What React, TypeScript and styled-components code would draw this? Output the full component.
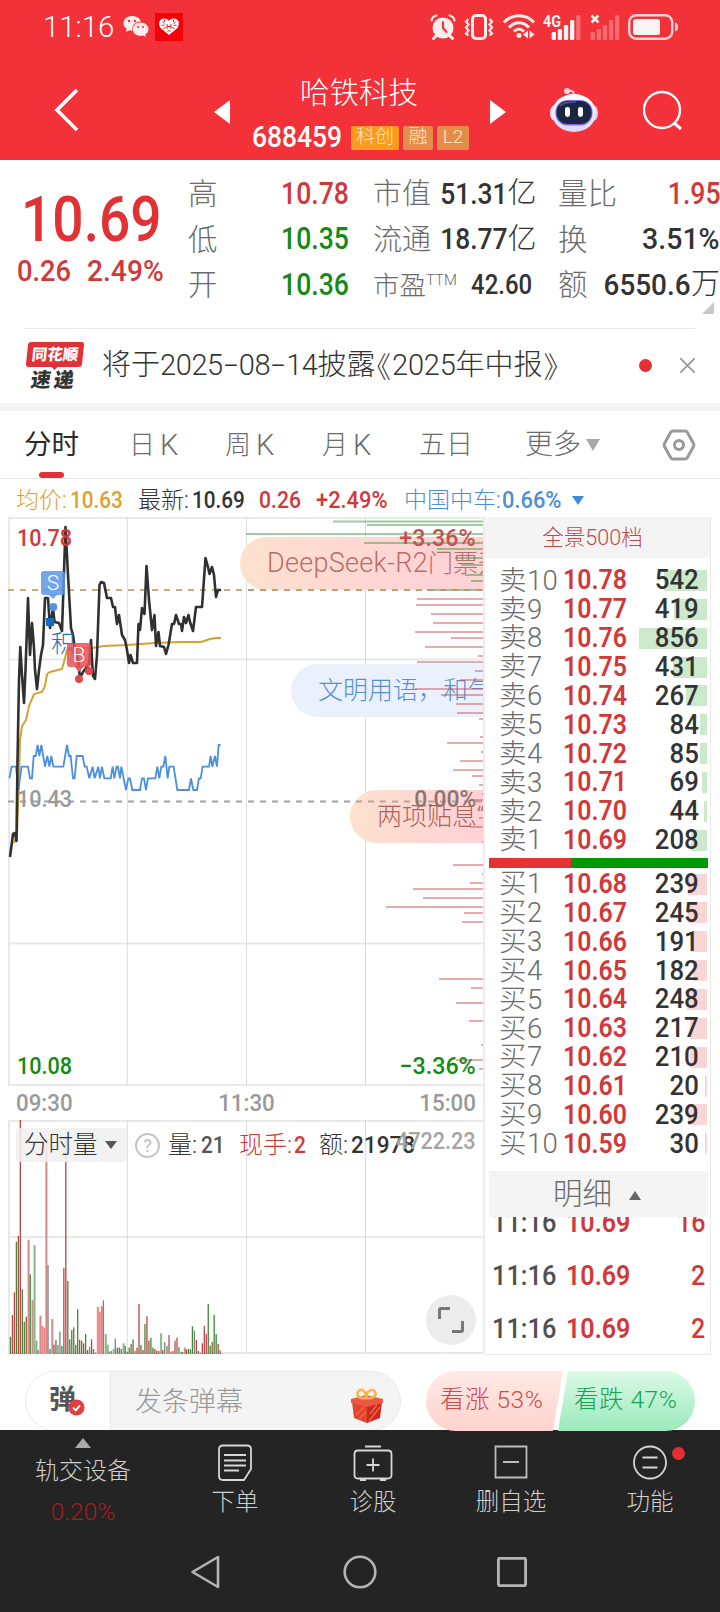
import React from "react";
import styled, { createGlobalStyle, css } from "styled-components";

const Global = createGlobalStyle`
  * { box-sizing: border-box; }
  body { margin: 0; background: #fff; }
  svg { display: block; flex: none; }
`;

const cjk = `"Noto Sans CJK SC", sans-serif`;
const RED = "#d2383a";
const GREEN = "#148a14";

const Screen = styled.div`
  width: 720px;
  height: 1612px;
  overflow: hidden;
  display: flex;
  flex-direction: column;
  background: #fff;
  font-family: ${cjk};
  font-weight: 300;
  color: #333;
`;

const Han = styled.span<{ $size: number; $color?: string; $weight?: number; $gap?: number }>`
  font: ${(p) => p.$weight ?? 300} ${(p) => p.$size}px/1 Roboto, ${cjk};
  letter-spacing: ${(p) => p.$gap ?? 0}px;
  color: ${(p) => p.$color ?? "inherit"};
  white-space: nowrap;
`;

const Num = styled.span<{ $size: number; $color?: string; $weight?: number; $k?: number; $from?: string }>`
  display: inline-block;
  font: ${(p) => p.$weight ?? 500} ${(p) => p.$size}px/1 Roboto, sans-serif;
  color: ${(p) => p.$color ?? "inherit"};
  white-space: nowrap;
  transform: scaleX(${(p) => p.$k ?? 0.87});
  transform-origin: ${(p) => p.$from ?? "left"} center;
`;

/* ---------- header ---------- */

const Header = styled.header`
  height: 160px;
  flex: none;
  background: #f23138;
  color: #fff;
`;

const StatusBar = styled.div`
  height: 54px;
  padding: 0 41px 0 43px;
  display: flex;
  justify-content: space-between;
  align-items: center;
`;

const StatusGroup = styled.div<{ $gap: number }>`
  display: flex;
  align-items: center;
  gap: ${(p) => p.$gap}px;
`;

const Clock = styled.div`
  width: 72px;
  display: flex;
`;

const TitleBar = styled.div`
  height: 106px;
  display: grid;
  grid-template-columns: 214px 33px 243px 16px 44px 48px 45px 1fr;
  align-items: center;
`;

const BackCell = styled.div`
  padding-left: 53px;
  padding-top: 6px;
`;

const ArrowCell = styled.div`
  padding-top: 10px;
`;

const IconCell = styled.div`
  padding-top: 6px;
`;

const TitleStack = styled.div`
  display: flex;
  flex-direction: column;
  align-items: flex-start;
  padding-top: 3px;
  height: 90px;
`;

const StockName = styled.div`
  padding-left: 53px;
  height: 58px;
  display: flex;
  align-items: center;
`;

const CodeRow = styled.div`
  display: grid;
  grid-template-columns: 95px 48px 30px 32px;
  column-gap: 4px;
  align-items: center;
  padding-left: 5px;
`;

const Tag = styled.span<{ $bg: string }>`
  height: 24px;
  border-radius: 2px;
  background: ${(p) => p.$bg};
  color: #ffe9bd;
  font: 300 19px/22px Roboto, ${cjk};
  text-align: center;
`;

/* ---------- quote ---------- */

const Quote = styled.section`
  height: 168px;
  flex: none;
  padding-top: 11px;
  display: grid;
  grid-template-columns: 188px 161px 24px 159px 26px 162px;
  position: relative;
`;

const PriceBlock = styled.div`
  padding-top: 15px;
`;

const LastPrice = styled.div`
  height: 66px;
  padding-left: 21px;
  display: flex;
  align-items: center;
`;

const ChangeRow = styled.div`
  height: 38px;
  padding-left: 17px;
  display: grid;
  grid-template-columns: 70px 1fr;
  align-items: center;
`;

const StatColumn = styled.div<{ $col: number }>`
  grid-column: ${(p) => p.$col};
`;

const Stat = styled.div`
  height: 45.5px;
  display: flex;
  align-items: center;
  justify-content: space-between;
  color: #333;
`;

const StatLabel = styled.div`
  display: flex;
  align-items: center;
  padding-top: 2px;
  color: #6b6b6b;
`;

const StatValue = styled.div`
  display: flex;
  align-items: center;
`;

const Super = styled.sup`
  font: 300 15px/15px Roboto, sans-serif;
  align-self: flex-start;
`;

const Corner = styled.i`
  position: absolute;
  right: 6px;
  bottom: 14px;
  border-left: 12px solid transparent;
  border-bottom: 12px solid #c9c9c9;
`;

const News = styled.section`
  height: 75px;
  flex: none;
  margin: 0 25px;
  border-top: 1px solid #e9e9e9;
  display: grid;
  grid-template-columns: 77px 537px 1fr 15px;
  align-items: center;
  padding-bottom: 1px;
`;

const NewsText = styled.div`
  display: flex;
  align-items: center;
  color: #333;
`;

const Dash = styled.span`
  width: 16px;
  font: 300 29px/1 Roboto, sans-serif;
  text-align: center;
  transform: scaleX(1.7);
`;

const Bracket = styled(Han)`
  font-family: ${cjk};
  font-feature-settings: "halt";
  margin: 0 1px;
`;

const NewsLogo = styled.div`
  width: 60px;
  height: 48px;
  display: flex;
  flex-direction: column;
  align-items: center;
`;

const LogoTop = styled.div`
  width: 56px;
  height: 25px;
  border-radius: 3px;
  background: #e03236;
  color: #fff;
  transform: skewX(-6deg);
  font: 900 15.5px/23px ${cjk};
  text-align: center;
  position: relative;
  &::after {
    content: "";
    position: absolute;
    left: 25px;
    top: 24px;
    border: 4px solid transparent;
    border-top-color: #e03236;
  }
`;

const LogoBottom = styled.div`
  transform: skewX(-8deg);
  font: 900 20px/22px ${cjk};
  letter-spacing: 3px;
  margin-top: 1px;
  padding-right: 2px;
  color: #333;
`;

const Dot = styled.i<{ $size: number }>`
  width: ${(p) => p.$size}px;
  height: ${(p) => p.$size}px;
  border-radius: 50%;
  background: #e52f33;
`;

/* ---------- tabs ---------- */

const Band = styled.div`
  height: 8px;
  flex: none;
  background: #f4f4f4;
`;

const Tabs = styled.nav`
  height: 68px;
  flex: none;
  padding-left: 24px;
  border-bottom: 1px solid #e6e6e6;
  display: grid;
  grid-template-columns: 105px 96px 97px 97px 106px 137px 1fr;
  align-items: center;
  color: #6b6b6b;
`;

const Tab = styled.div<{ $active?: boolean }>`
  height: 67px;
  padding-top: 1px;
  display: flex;
  align-items: center;
  gap: 5px;
  position: relative;
  ${(p) =>
    p.$active &&
    css`
      color: #2a2a2a;
      &::after {
        content: "";
        position: absolute;
        left: 15px;
        bottom: 0;
        width: 25px;
        height: 6px;
        border-radius: 3px;
        background: #e03236;
      }
    `}
`;

const Triangle = styled.i<{ $w: number; $h: number; $color: string; $up?: boolean }>`
  width: 0;
  border-left: ${(p) => p.$w / 2}px solid transparent;
  border-right: ${(p) => p.$w / 2}px solid transparent;
  ${(p) => (p.$up ? "border-bottom" : "border-top")}: ${(p) => p.$h}px solid ${(p) => p.$color};
`;

const InfoRow = styled.div`
  height: 38px;
  flex: none;
  padding-left: 16px;
  display: grid;
  grid-template-columns: 54px 68px 54px 67px 57px 88px 98px 70px 1fr;
  align-items: center;
  padding-top: 5px;
`;

/* ---------- main area ---------- */

const Main = styled.main`
  height: 838px;
  flex: none;
  display: grid;
  grid-template-columns: 485px 226px;
`;

const Charts = styled.div`
  padding-left: 8px;
  border-right: 2px solid #ececec;
  height: 837px;
`;

const PriceChart = styled.div`
  position: relative;
  height: 569px;
  overflow: hidden;
`;

const Overlay = styled.div<{ $x?: number; $r?: number; $y: number }>`
  position: absolute;
  top: ${(p) => p.$y}px;
  ${(p) => (p.$r !== undefined ? `right: ${p.$r}px;` : `left: ${p.$x}px;`)}
  display: flex;
  align-items: center;
`;

const Bullet = styled.div<{ $x: number; $y: number; $bg: string; $color: string }>`
  position: absolute;
  left: ${(p) => p.$x}px;
  top: ${(p) => p.$y}px;
  width: 400px;
  height: 53px;
  padding-left: 27px;
  border-radius: 27px;
  display: flex;
  align-items: center;
  background: ${(p) => p.$bg};
  color: ${(p) => p.$color};
`;

const Marker = styled.div<{ $x: number; $y: number; $bg: string }>`
  position: absolute;
  left: ${(p) => p.$x}px;
  top: ${(p) => p.$y}px;
  width: 24px;
  height: 24px;
  border-radius: 3px;
  background: ${(p) => p.$bg};
  color: #fff;
  font: 300 21px/24px Roboto, sans-serif;
  text-align: center;
`;

const TimeAxis = styled.div`
  height: 34px;
  padding: 0 7px 0 8px;
  display: flex;
  justify-content: space-between;
  align-items: center;
  color: #999;
`;

const VolumeChart = styled.div`
  position: relative;
  height: 234px;
`;

const VolumeHead = styled.div`
  position: absolute;
  left: 8px;
  top: 8px;
  height: 34px;
  display: grid;
  grid-template-columns: 111px 41px 33px 38px 55px 25px 32px 70px;
  align-items: center;
`;

const Picker = styled.div`
  height: 34px;
  padding-left: 8px;
  border-radius: 4px;
  display: flex;
  align-items: center;
  gap: 7px;
  background: rgba(240, 240, 240, 0.88);
  color: #333;
`;

const Help = styled.div`
  width: 25px;
  height: 25px;
  margin-left: 8px;
  border: 2px solid #c4c4c4;
  border-radius: 50%;
  color: #bbb;
  font: 400 18px/21px Roboto, sans-serif;
  text-align: center;
`;

const Expand = styled.div`
  position: absolute;
  right: 7px;
  bottom: 9px;
  width: 50px;
  height: 50px;
  border-radius: 50%;
  background: #ececec;
  display: grid;
  place-items: center;
`;

/* ---------- order book ---------- */

const Book = styled.aside`
  height: 838px;
  border: 1px solid #e8e8e8;
  border-top: 0;
  border-left: 0;
  display: flex;
  flex-direction: column;
  overflow: hidden;
`;

const BookHead = styled.div`
  height: 41px;
  flex: none;
  background: #f4f4f4;
  display: flex;
  align-items: center;
  justify-content: center;
  padding-right: 10px;
`;

const Levels = styled.div<{ $top: number }>`
  padding-top: ${(p) => p.$top}px;
`;

const Level = styled.div`
  height: 28.86px;
  padding-left: 14px;
  padding-right: 11px;
  display: grid;
  grid-template-columns: 64px 70px 1fr;
  align-items: center;
  position: relative;
`;

const LevelNum = styled.div`
  text-align: right;
  position: relative;
`;

const DepthBar = styled.i<{ $w: number; $color: string }>`
  position: absolute;
  right: 3px;
  top: 4px;
  height: 21px;
  width: ${(p) => p.$w}px;
  background: ${(p) => p.$color};
`;

const Ratio = styled.div`
  height: 10px;
  margin: 3px 2px 1px 4px;
  flex: none;
  background: linear-gradient(90deg, #e63232 82px, #029a02 82px);
`;

const DetailHead = styled.div`
  height: 46px;
  margin: 13px 2px 0 4px;
  flex: none;
  padding-left: 64px;
  padding-top: 2px;
  display: flex;
  align-items: center;
  gap: 17px;
  background: #f4f4f4;
  color: #6b6b6b;
`;

const Trades = styled.div`
  flex: 1;
  min-height: 0;
  overflow: hidden;
  display: flex;
  flex-direction: column;
  justify-content: flex-end;
`;

const Trade = styled.div`
  height: 53px;
  flex: none;
  padding: 4px 5px 0 7px;
  display: grid;
  grid-template-columns: 74px 70px 1fr;
  align-items: center;
`;

/* ---------- comment bar ---------- */

const CommentBar = styled.section`
  height: 75px;
  flex: none;
  padding: 16px 25px 0;
  display: flex;
  justify-content: space-between;
`;

const CommentPill = styled.div`
  width: 376px;
  height: 60px;
  border: 1px solid #e8e8e8;
  border-radius: 30px;
  background: #f4f4f4;
  overflow: hidden;
  display: grid;
  grid-template-columns: 85px 1fr 50px;
  align-items: center;
`;

const DanmuToggle = styled.div`
  height: 60px;
  background: #fff;
  border-right: 1px solid #e8e8e8;
  padding-left: 23px;
  position: relative;
  font: 700 27px/52px ${cjk};
  color: #555;
`;

const ToggleCheck = styled.svg`
  position: absolute;
  left: 42px;
  top: 27px;
`;

const CommentHint = styled.div`
  padding-left: 24px;
  color: #999;
  line-height: 1;
`;

const GiftCell = styled.div`
  padding-top: 8px;
`;

const Votes = styled.div`
  width: 269px;
  display: flex;
`;

const Vote = styled.div<{ $up?: boolean }>`
  height: 60px;
  width: 137px;
  margin-left: ${(p) => (p.$up ? 0 : -5)}px;
  border-radius: ${(p) => (p.$up ? "30px 0 0 30px" : "0 30px 30px 0")};
  clip-path: ${(p) =>
    p.$up ? "polygon(0 0, 100% 0, 127px 100%, 0 100%)" : "polygon(10px 0, 100% 0, 100% 100%, 0 100%)"};
  background: ${(p) =>
    p.$up ? "linear-gradient(#ffeae7, #ffd3cd)" : "linear-gradient(#dcfae7, #9aeabb)"};
  color: ${(p) => (p.$up ? "#cf4a48" : "#17a455")};
  padding-left: ${(p) => (p.$up ? 14 : 16)}px;
  padding-bottom: 1px;
  display: flex;
  align-items: center;
`;

/* ---------- bottom ---------- */

const Bottom = styled.footer`
  height: 182px;
  flex: none;
  background: #242424;
  color: #d0d0d0;
`;

const Actions = styled.div`
  height: 102px;
  display: grid;
  grid-template-columns: 166px 138px 138px 138px 140px;
`;

const Action = styled.div`
  display: flex;
  flex-direction: column;
  align-items: center;
  padding-top: 13px;
  gap: 8px;
  position: relative;
`;

const Sector = styled.div`
  display: flex;
  flex-direction: column;
  align-items: center;
  padding-top: 8px;
`;

const SectorName = styled.div`
  margin-top: 11px;
  height: 24px;
  line-height: 1;
`;

const SectorChange = styled.div`
  margin-top: 17px;
  line-height: 1;
`;

const Badge = styled(Dot)`
  position: absolute;
  left: 92px;
  top: 17px;
`;

const NavBar = styled.div`
  height: 80px;
  display: grid;
  grid-template-columns: 191px 152px 154px 1fr;
  align-items: center;
`;

/* ---------- data ---------- */

const pricePts =
  "10,857 13,834 15,833 16.5,841 17.5,760 19,680 20.3,647 22,675 24,703 25.5,670 28,598 30,655 32,623 34,648 35,670 37,689 39,670 41,655 43,645 45,598 48,598 50,628 53,608 54.5,622 59,623 62,631 65.5,527 68,575 71,628 73,635 75,650 78,660 80,678 83,672 86,668 89,663 91,640 92,660 93,676 95,679 97,655 99.5,585 101,582 104,583 107,598 111,598 113,607 115,607 117,624 119,615 122,635 125,640 127,650 129,663 130.5,655 133,663 137,663 138.5,624 140,630 142,608 144.5,614 146.5,566 149,600 152,630 154.5,615 156,646 158.5,632 160,646 164,647 166,654 168.5,645 172,624 174,624 176,615 179,624 181,624 182,631 184,617 186,623 188.5,615 190,622 193,631 196,607 202,607 205.5,558 208,567 209.5,574 212,567 214,575 216,597 218,590 221,590";
const avgPts =
  "14,843 17,835 19,780 20,740 22,726 26,720 29,706 34,694 42,692 45,686 47,674 50,672 62,669 64,662 67,650 72,648 92,648 104,646 127,645 155,643 180,642 201,642 210,639 216,638 221,638";
const peerPts =
  "28,415 35,380 48,380 55,450 65,380 84,380 90,415 96,415 101,348 107,348 113,315 118,348 124,315 135,380 142,348 148,380 154,348 160,380 190,380 201,315 207,348 212,348 219,415 224,415 230,348 248,348 254,380 260,380 268,415 278,380 284,415 295,380 300,415 306,380 313,415 332,415 338,380 343,415 350,380 354,380 360,415 364,380 378,450 385,415 390,415 397,450 420,450 426,415 432,415 438,450 444,415 466,415 472,380 478,415 484,380 490,380 496,348 503,415 508,380 521,380 532,450 567,450 573,415 580,450 591,450 597,415 602,415 608,380 627,380 632,348 637,380 645,348 651,380 656,315 662,315";

const depthUp: [number, number][] = [
  [521.5, 333], [525, 367], [534, 246], [543, 364], [549, 437], [558, 455], [565, 461], [575, 465], [581, 471], [590, 427],
];
const depthDown: [number, number][] = [
  [599, 417], [605, 416], [614, 431], [623, 433], [632, 415], [638, 451], [647, 425], [656, 478], [662, 417], [671, 475],
  [680, 460], [689, 415], [695, 441], [704, 456], [713, 457], [719, 479], [737, 480], [743, 447], [752, 481], [761, 460],
  [770, 453], [776, 472], [785, 479], [794, 482], [800, 470], [818, 479], [827, 470], [842, 482], [865, 453], [874, 482],
  [883, 470], [889, 413], [898, 423], [907, 386], [913, 464], [922, 462], [979, 439], [988, 471], [1003, 456], [1021, 469],
  [1045, 481], [1060, 456], [1069, 479],
];

const volume =
  "52g 117r 185r 337g 354r 702r 194g 97g 112r 343p 239g 162p 327l 40l 12k 115p 84s 79s 647p 267k 15g 105p 28r 42g 27k 67k 24g 258r 650r 219g 44g 72g 80r 27g 134g 43r 40g 32r 60g 12r 22k 44r 15g 4k 141s 127s 144s 161k 60l 28l 7k 9k 15l 46k 19g 19r 15g 32l 24g 7r 19g 30r 44g 10k 19r 150r 27g 12r 90g 113r 40r 48g 19g 15r 10r 9r 62l 12r 36k 24l 57p 7s 9s 40p 49p 21l 6l 6g 19p 14r 15g 14g 83g 70k 42r 9g 4k 32r 84r 60r 150g 25g 36r 117g 60g 30r 11r 2k"
    .split(" ")
    .map((s) => ({ h: parseInt(s, 10) / 3, c: s.slice(-1) }));
const volumeColor: Record<string, string> = {
  r: "#b94444", g: "#3c8a36", k: "#808080", p: "#cf8a8a", l: "#84b884", s: "#ef8484",
};

const asks: [string, string, number][] = [
  ["卖10", "10.78", 542], ["卖9", "10.77", 419], ["卖8", "10.76", 856], ["卖7", "10.75", 431], ["卖6", "10.74", 267],
  ["卖5", "10.73", 84], ["卖4", "10.72", 85], ["卖3", "10.71", 69], ["卖2", "10.70", 44], ["卖1", "10.69", 208],
];
const bids: [string, string, number][] = [
  ["买1", "10.68", 239], ["买2", "10.67", 245], ["买3", "10.66", 191], ["买4", "10.65", 182], ["买5", "10.64", 248],
  ["买6", "10.63", 217], ["买7", "10.62", 210], ["买8", "10.61", 20], ["买9", "10.60", 239], ["买10", "10.59", 30],
];
const trades: [string, string, number][] = [["11:16", "10.69", 16], ["11:16", "10.69", 2], ["11:16", "10.69", 2]];

/* ---------- icons ---------- */

const WeChat = () => (
  <svg width="26" height="24" viewBox="0 0 26 24">
    <path fill="#ffecec" d="M9 1C4 1 .5 4.200 .5 8.200c0 2.400 1.200 4.300 3.200 5.600L3 17l3.400-1.800c1 .2 2 .3 3 .2C8.500 10.500 12.300 6.500 18 6.600 17 3.200 13.400 1 9 1z" />
    <path fill="#ffecec" d="M17.500 7.600c-4.400 0-7.800 2.900-7.800 6.600s3.400 6.600 7.800 6.600c1 0 1.900-.1 2.700-.4L23 22l-.6-2.700c1.900-1.200 3.100-3 3.100-5.100 0-3.700-3.500-6.600-8-6.600z" />
    <g fill="#f23138"><circle cx="6" cy="6" r="1.200" /><circle cx="12" cy="6" r="1.200" /><circle cx="15" cy="12" r="1" /><circle cx="20" cy="12" r="1" /></g>
  </svg>
);

const HeartApp = () => (
  <svg width="28" height="28" viewBox="0 0 28 28">
    <rect width="28" height="28" fill="#f40006" />
    <path d="M14 8C12 5 8 5 6 6.500 3 9 4 13 6 15.500L14 22l8-6.500c2-2.500 3-6.500 0-9C20 5 16 5 14 8z" fill="#fff" />
    <path d="M12 11v5M16 11v5M12 13.500h4M7.500 9l2 1.500M6.500 12.500l3-.5M20.500 9l-2 1.500M21.500 12.500l-3-.5M8.500 15.500l2-1M19.500 15.500l-2-1M12.500 18.500l1.500-1 1.500 1M9.500 7v2M18.500 7v2" stroke="#f40006" strokeWidth=".9" fill="none" />
  </svg>
);

const Alarm = () => (
  <svg width="26" height="26" viewBox="0 0 26 26" fill="none" stroke="#ffecec" strokeLinecap="round">
    <circle cx="13" cy="14" r="10.500" fill="#ffecec" stroke="none" />
    <path d="M1.500 6.500C2 4 4 2 6.500 1.500M24.500 6.500C24 4 22 2 19.500 1.500" strokeWidth="2.200" />
    <path d="M6 22l-2.500 2.500M20 22l2.500 2.500" strokeWidth="3" />
    <path d="M13 8v6l3.500 4" stroke="#f23138" strokeWidth="2" />
  </svg>
);

const Vibrate = () => (
  <svg width="30" height="26" viewBox="0 0 30 26" fill="none" stroke="#ffecec">
    <rect x="8.500" y="1.500" width="13" height="23" rx="3.500" strokeWidth="3" />
    <path d="M4.500 5L2 7.500l2.500 3L2 13.500l2.500 3L2 19.500l2.500 2M25.500 5L28 7.500l-2.500 3 2.500 3-2.500 3 2.500 3-2.500 2" strokeWidth="2.200" />
  </svg>
);

const Wifi = () => (
  <svg width="32" height="26" viewBox="0 0 32 26" fill="none" stroke="#ffecec" strokeWidth="3">
    <path d="M1 8.500C9-.5 23-.5 31 8.500M6 13.500C12 7 20 7 26 13.500M11 17.500c3-3 7-3 10 0" />
    <circle cx="16" cy="21.500" r="2.500" fill="#ffecec" stroke="none" />
    <path d="M20 20.500l5-4v8zM26.500 16.500l5 4-5 4z" fill="#ffecec" stroke="none" />
  </svg>
);

const Bars = ({ strong, x }: { strong: number; x: number }) => (
  <g fill="#fff3f3">
    {[8, 11, 15, 20, 25].map((h, i) => (
      <rect key={i} x={x + i * 6.1} y={26 - h} width="4.300" height={h} rx="1.200" opacity={i < strong ? 1 : 0.3} />
    ))}
  </g>
);

const Signal4G = () => (
  <svg width="38" height="26" viewBox="0 0 38 26">
    <text x="0" y="13" fontFamily="Roboto" fontWeight="700" fontSize="16" fill="#fff3f3" textLength="18" lengthAdjust="spacingAndGlyphs">4G</text>
    <Bars strong={4} x={8.7} />
  </svg>
);

const SignalNone = () => (
  <svg width="30" height="26" viewBox="0 0 30 26">
    <path d="M1.500 1.500l7 7M8.500 1.500l-7 7" stroke="#fff3f3" strokeWidth="2.500" />
    <Bars strong={0} x={0.6} />
  </svg>
);

const Battery = () => (
  <svg width="51" height="26" viewBox="0 0 51 26">
    <rect x="1.200" y="1.200" width="43" height="23.500" rx="7" fill="none" stroke="#ffd3d5" strokeWidth="2.400" />
    <rect x="5" y="5" width="27" height="16" rx="2.500" fill="#fff3f3" />
    <path d="M47 8.500c4 0 4 9 0 9z" fill="#ffd3d5" />
  </svg>
);

const Robot = () => (
  <svg width="48" height="46" viewBox="0 0 48 46">
    <defs>
      <linearGradient id="rb" x1="0" y1="0" x2="0" y2="1"><stop offset="0" stopColor="#fff" /><stop offset="1" stopColor="#dcd8fb" /></linearGradient>
    </defs>
    <path d="M17 4c5-1 7 0 7 5" fill="none" stroke="#fbc9d2" strokeWidth="2" />
    <circle cx="17" cy="4" r="3" fill="#ffd3dc" />
    <ellipse cx="4" cy="26" rx="4" ry="7.500" fill="#e2d8fa" />
    <ellipse cx="44" cy="26" rx="4" ry="7.500" fill="#d8cdf8" />
    <ellipse cx="24" cy="26" rx="22" ry="19" fill="url(#rb)" />
    <rect x="5.500" y="13" width="37" height="25.500" rx="12" fill="#7b6de8" />
    <rect x="6.500" y="14" width="35" height="23" rx="11" fill="#1b2544" />
    <path d="M10 19c3-4 10-4 16-4" stroke="#4a5680" strokeWidth="1.500" fill="none" />
    <rect x="15" y="20" width="5" height="10" rx="2.400" fill="#fff" />
    <rect x="28" y="20" width="5" height="10" rx="2.400" fill="#fff" />
  </svg>
);

const Gift = () => (
  <svg width="34" height="36" viewBox="0 0 34 36">
    <path d="M2 14l15 4v17L4 30z" fill="#e2442e" />
    <path d="M17 18l15-4-2 16-13 5z" fill="#c9291f" />
    <path d="M1 11l15-4 17 4v4l-16 4L1 15z" fill="#ee5742" />
    <path d="M6 27l8-8M9 31l7-7M19 33l11-14M20 26l7-9" stroke="#f4693f" strokeWidth="1.300" />
    <path d="M16 10C10 11 6 8 8 4s8-2 8 5c1-7 7-9 9-5s-2 7-9 6z" fill="none" stroke="#f4b84a" strokeWidth="2.600" />
  </svg>
);

const IconBox = ({ children }: { children: React.ReactNode }) => (
  <svg width="40" height="40" viewBox="0 0 40 40" fill="none" stroke="#d6d6d6" strokeWidth="1.800">
    {children}
  </svg>
);

/* ---------- parts ---------- */

const LevelRow = ({ row, tint }: { row: [string, string, number]; tint: string }) => (
  <Level>
    <DepthBar $w={Math.max(1.5, row[2] * 0.0793)} $color={tint} />
    <Han $size={27.5} $gap={0.4} $color="#6b6b6b">{row[0]}</Han>
    <Num $size={28} $color={RED} $weight={600} $k={0.89}>{row[1]}</Num>
    <LevelNum><Num $size={28} $weight={500} $k={0.92} $from="right">{row[2]}</Num></LevelNum>
  </Level>
);

const PricePlot = () => (
  <svg width="476" height="569" viewBox="8 517 476 569" fill="none">
    <path d="M8 518H484M8 659.500H484M8 943.500H484M8 1085H484M9 517V1086" stroke="#e9e9e9" strokeWidth="2" />
    <path d="M127.300 517V1086M246.500 517V1086M365.500 517V1086" stroke="#dcdcdc" />
    <path d="M8 590H484" stroke="#c5ad7c" strokeWidth="2" strokeDasharray="6 6" />
    <path d="M8 801.500H484" stroke="#a0a0a0" strokeWidth="2" strokeDasharray="6 6" />
    <polyline points={avgPts} stroke="#d9a02f" strokeWidth="2" />
    <g transform="translate(0 640) scale(.3333)"><polyline points={peerPts} stroke="#4d90dc" strokeWidth="5.500" /></g>
    <polyline points={pricePts} stroke="#303030" strokeWidth="2.600" strokeLinejoin="round" />
  </svg>
);

const DepthPlot = () => (
  <svg width="476" height="569" viewBox="8 517 476 569" fill="none">
    {depthUp.map(([y, x]) => <path key={y} d={`M${x} ${y}H484`} stroke="#3f9a3f" strokeOpacity=".5" strokeWidth="2" />)}
    {depthDown.map(([y, x]) => <path key={y} d={`M${x} ${y}H484`} stroke="#cc5055" strokeOpacity=".48" strokeWidth="2" />)}
    <path d="M356 801.500H484" stroke="#a08a86" strokeOpacity=".7" strokeWidth="2" strokeDasharray="6 6" />
    <path d="M248 590H484" stroke="#b5985f" strokeOpacity=".8" strokeWidth="2" strokeDasharray="6 6" />
  </svg>
);

export default function App() {
  return (
    <Screen>
      <Global />
      <Header>
        <StatusBar>
          <StatusGroup $gap={8}>
            <Clock><Num $size={30} $weight={300} $k={0.98}>11:16</Num></Clock>
            <StatusGroup $gap={6}><WeChat /><HeartApp /></StatusGroup>
          </StatusGroup>
          <StatusGroup $gap={8.4}><Alarm /><Vibrate /><Wifi /><Signal4G /><SignalNone /><Battery /></StatusGroup>
        </StatusBar>
        <TitleBar>
          <BackCell>
            <svg width="26" height="44" viewBox="0 0 26 44" fill="none" stroke="#fff" strokeWidth="3.600"><path d="M24 2L4 22l20 20" /></svg>
          </BackCell>
          <ArrowCell><svg width="16" height="24" viewBox="0 0 16 24"><path d="M16 0v24L0 12z" fill="#fff" /></svg></ArrowCell>
          <TitleStack>
            <StockName><Han $size={29.5}>哈铁科技</Han></StockName>
            <CodeRow>
              <Num $size={29} $weight={500} $k={0.91}>688459</Num>
              <Tag $bg="#fd9b20">科创</Tag>
              <Tag $bg="#e58c4d">融</Tag>
              <Tag $bg="#e58c4d">L2</Tag>
            </CodeRow>
          </TitleStack>
          <ArrowCell><svg width="16" height="24" viewBox="0 0 16 24"><path d="M0 0v24l16-12z" fill="#fff" /></svg></ArrowCell>
          <span />
          <IconCell><Robot /></IconCell>
          <span />
          <IconCell>
            <svg width="40" height="40" viewBox="0 0 40 40" fill="none" stroke="#fff" strokeWidth="2.400"><circle cx="19" cy="20" r="18" /><path d="M31 33l7 6" strokeWidth="3" /></svg>
          </IconCell>
        </TitleBar>
      </Header>

      <Quote>
        <PriceBlock>
          <LastPrice><Num $size={63} $color="#e03234" $weight={500} $k={0.875}>10.69</Num></LastPrice>
          <ChangeRow>
            <Num $size={30} $color={RED} $k={0.91}>0.26</Num>
            <Num $size={30} $color={RED} $k={0.94}>2.49%</Num>
          </ChangeRow>
        </PriceBlock>
        <StatColumn $col={2}>
          <Stat><StatLabel><Han $size={29.5}>高</Han></StatLabel><Num $size={30.5} $color={RED} $from="right">10.78</Num></Stat>
          <Stat><StatLabel><Han $size={29.5}>低</Han></StatLabel><Num $size={30.5} $color={GREEN} $from="right">10.35</Num></Stat>
          <Stat><StatLabel><Han $size={29.5}>开</Han></StatLabel><Num $size={30.5} $color={GREEN} $from="right">10.36</Num></Stat>
        </StatColumn>
        <StatColumn $col={4}>
          <Stat><StatLabel><Han $size={29}>市值</Han></StatLabel><StatValue><Num $size={30} $k={0.88} $from="right">51.31</Num><Han $size={29}>亿</Han></StatValue></Stat>
          <Stat><StatLabel><Han $size={29}>流通</Han></StatLabel><StatValue><Num $size={30} $k={0.88} $from="right">18.77</Num><Han $size={29}>亿</Han></StatValue></Stat>
          <Stat><StatLabel><Han $size={26.5}>市盈</Han><Super>TTM</Super></StatLabel><Num $size={27.5} $from="right">42.60</Num></Stat>
        </StatColumn>
        <StatColumn $col={6}>
          <Stat><StatLabel><Han $size={29.5}>量比</Han></StatLabel><Num $size={30.5} $color={RED} $from="right">1.95</Num></Stat>
          <Stat><StatLabel><Han $size={29.5}>换</Han></StatLabel><Num $size={30} $from="right" $k={0.95}>3.51%</Num></Stat>
          <Stat><StatLabel><Han $size={29.5}>额</Han></StatLabel><StatValue><Num $size={30} $k={0.93} $from="right">6550.6</Num><Han $size={29}>万</Han></StatValue></Stat>
        </StatColumn>
        <Corner />
      </Quote>

      <News>
        <NewsLogo><LogoTop>同花顺</LogoTop><LogoBottom>速递</LogoBottom></NewsLogo>
        <NewsText>
          <Han $size={29}>将于</Han>
          <Han $size={29} $gap={-0.4}>2025</Han><Dash>-</Dash><Han $size={29} $gap={-0.4}>08</Han><Dash>-</Dash><Han $size={29} $gap={-0.4}>14</Han>
          <Han $size={29}>披露</Han>
          <Bracket $size={29}>《</Bracket>
          <Han $size={29} $gap={-0.2}>2025</Han>
          <Han $size={29}>年中报</Han>
          <Bracket $size={29}>》</Bracket>
        </NewsText>
        <Dot $size={13} />
        <svg width="15" height="15" viewBox="0 0 15 15" stroke="#999" strokeWidth="1.800"><path d="M0 0l15 15M15 0L0 15" /></svg>
      </News>
      <Band />

      <Tabs>
        <Tab $active><Han $size={27.5} $weight={400}>分时</Han></Tab>
        <Tab><Han $size={26}>日</Han><Han $size={29}>K</Han></Tab>
        <Tab><Han $size={26}>周</Han><Han $size={29}>K</Han></Tab>
        <Tab><Han $size={26}>月</Han><Han $size={29}>K</Han></Tab>
        <Tab><Han $size={27}>五日</Han></Tab>
        <Tab><Han $size={28}>更多</Han><Triangle $w={15} $h={12} $color="#a8a8a8" /></Tab>
        <svg width="34" height="34" viewBox="0 0 34 34" fill="none" stroke="#999" strokeWidth="3">
          <path d="M11 3h12q1.500 0 2.300 1.300L31.500 15.500q.8 1.500 0 3L25.300 29.700Q24.500 31 23 31H11q-1.500 0-2.300-1.300L2.500 18.500q-.8-1.500 0-3L8.700 4.300Q9.500 3 11 3z" />
          <circle cx="17" cy="17" r="4.500" />
        </svg>
      </Tabs>

      <InfoRow>
        <Han $size={23} $color="#dfa02a">均价:</Han>
        <Num $size={23} $color="#dfa02a" $k={0.9}>10.63</Num>
        <Han $size={23}>最新:</Han>
        <Num $size={23} $k={0.9}>10.69</Num>
        <Num $size={23} $color={RED} $k={0.92}>0.26</Num>
        <Num $size={23} $color={RED} $k={0.95}>+2.49%</Num>
        <Han $size={23} $color="#4c8fd8">中国中车:</Han>
        <Num $size={23} $color="#4c8fd8" $k={0.95}>0.66%</Num>
        <Triangle $w={13} $h={9} $color="#3f8be0" />
      </InfoRow>

      <Main>
        <Charts>
          <PriceChart>
            <PricePlot />
            <Bullet $x={232} $y={20} $bg="linear-gradient(90deg, #fde1cd, #ffd2d6 200px)" $color="#b96d69">
              <Han $size={27} $gap={0.3}>DeepSeek-R2</Han><Han $size={25}>门票开</Han>
            </Bullet>
            <Bullet $x={283} $y={147} $bg="#eaf1fc" $color="#5590d2"><Han $size={25}>文明用语，和气</Han></Bullet>
            <Bullet $x={342} $y={273} $bg="linear-gradient(90deg, #fde1cd, #ffd2d6 130px)" $color="#b0605b"><Han $size={25}>两项贴息“</Han></Bullet>
            <Overlay $x={0} $y={0}><DepthPlot /></Overlay>
            <Overlay $x={9} $y={9}><Num $size={24} $color={RED} $k={0.9}>10.78</Num></Overlay>
            <Overlay $r={7} $y={9}><Num $size={24} $color="#c8504e" $k={0.97} $from="right">+3.36%</Num></Overlay>
            <Overlay $x={9} $y={270}><Num $size={24} $color="#999" $k={0.9}>10.43</Num></Overlay>
            <Overlay $r={7} $y={270}><Num $size={24} $color="#8d7470" $k={0.95} $from="right">0.00%</Num></Overlay>
            <Overlay $x={9} $y={537}><Num $size={24} $color={GREEN} $k={0.9}>10.08</Num></Overlay>
            <Overlay $r={7} $y={537}><Num $size={24} $color={GREEN} $k={0.97} $from="right">−3.36%</Num></Overlay>
            <Overlay $x={43} $y={115}><Han $size={24} $color="#2c70b8">积</Han></Overlay>
            <Overlay $x={33} $y={72}>
              <svg width="70" height="90" viewBox="41 589 70 90">
                <path d="M48 594h10l-5 5z" fill="#6ea5e8" />
                <circle cx="53.300" cy="607" r="4" fill="#5292e2" />
                <rect x="46" y="618" width="8" height="8" fill="#0f6ac8" />
              </svg>
            </Overlay>
            <Overlay $x={63} $y={148}>
              <svg width="26" height="20" viewBox="71 665 26 20">
                <path d="M74 666h10l-5 6z" fill="#e65a5e" />
                <circle cx="79" cy="679" r="4" fill="#e04a4e" /><circle cx="89" cy="671" r="4" fill="#e04a4e" />
              </svg>
            </Overlay>
            <Marker $x={33} $y={54} $bg="rgba(90,152,230,.85)">S</Marker>
            <Marker $x={59} $y={126} $bg="rgba(230,80,84,.85)">B</Marker>
          </PriceChart>
          <TimeAxis>
            <Num $size={24} $color="#999" $k={0.93} $weight={500}>09:30</Num>
            <Num $size={24} $color="#999" $k={0.93} $weight={500} $from="center">11:30</Num>
            <Num $size={24} $color="#999" $k={0.93} $weight={500} $from="right">15:00</Num>
          </TimeAxis>
          <VolumeChart>
            <svg width="476" height="234" viewBox="8 1120 476 234" fill="none">
              <path d="M8 1121H484M8 1237H484M8 1353H484M9 1120V1354" stroke="#e9e9e9" strokeWidth="2" />
              <path d="M127.300 1120V1354M246.500 1120V1354M365.500 1120V1354" stroke="#dcdcdc" />
              {volume.map((v, i) => {
                const wide = "pls".includes(v.c);
                return <rect key={i} x={9.8 + i * 1.978} y={1354 - v.h} width={wide ? 2 : 1.3} height={v.h} fill={volumeColor[v.c]} />;
              })}
            </svg>
            <VolumeHead>
              <Picker><Han $size={24.5}>分时量</Han><Triangle $w={13} $h={8} $color="#555" /></Picker>
              <Help>?</Help>
              <Han $size={24}>量:</Han>
              <Num $size={24} $color="#555">21</Num>
              <Han $size={24} $color={RED}>现手:</Han>
              <Num $size={24} $color={RED}>2</Num>
              <Han $size={24}>额:</Han>
              <Num $size={24} $k={0.94}>21978</Num>
            </VolumeHead>
            <Overlay $r={7} $y={9}><Num $size={24} $color="#a4a4a4" $k={0.9} $from="right">4722.23</Num></Overlay>
            <Expand>
              <svg width="26" height="26" viewBox="0 0 26 26" fill="none" stroke="#777" strokeWidth="3"><path d="M1.500 12V3q0-1.500 1.500-1.500h9M24.500 14v9q0 1.500-1.500 1.500h-9" /></svg>
            </Expand>
          </VolumeChart>
        </Charts>

        <Book>
          <BookHead><Han $size={21.5} $color="#bf4a48">全景500档</Han></BookHead>
          <Levels $top={8}>{asks.map((r) => <LevelRow key={r[0]} row={r} tint="#cce9cc" />)}</Levels>
          <Ratio />
          <Levels $top={1}>{bids.map((r) => <LevelRow key={r[0]} row={r} tint="#f9d5d5" />)}</Levels>
          <DetailHead><Han $size={29.5}>明细</Han><Triangle $up $w={13} $h={9} $color="#666" /></DetailHead>
          <Trades>
            {trades.map((t, i) => (
              <Trade key={i}>
                <Num $size={28.5} $color="#505050" $k={0.89}>{t[0]}</Num>
                <Num $size={28.5} $color={RED} $weight={600} $k={0.88}>{t[1]}</Num>
                <LevelNum><Num $size={28.5} $color={RED} $k={0.88} $from="right">{t[2]}</Num></LevelNum>
              </Trade>
            ))}
          </Trades>
        </Book>
      </Main>

      <CommentBar>
        <CommentPill>
          <DanmuToggle>
            弹
            <ToggleCheck width="17" height="17" viewBox="0 0 17 17"><circle cx="8.500" cy="8.500" r="8" fill="#e2403c" /><path d="M5 8.500l2.700 2.800 4.300-5" fill="none" stroke="#fff" strokeWidth="1.800" /></ToggleCheck>
          </DanmuToggle>
          <CommentHint><Han $size={27}>发条弹幕</Han></CommentHint>
          <GiftCell><Gift /></GiftCell>
        </CommentPill>
        <Votes>
          <Vote $up><Han $size={24.5} $gap={0.5}>看涨 53%</Han></Vote>
          <Vote><Han $size={24.5} $gap={0.5}>看跌 47%</Han></Vote>
        </Votes>
      </CommentBar>

      <Bottom>
        <Actions>
          <Sector>
            <Triangle $up $w={17} $h={10} $color="#aaa" />
            <SectorName><Han $size={24}>轨交设备</Han></SectorName>
            <SectorChange><Han $size={24.5} $color="#a3201f">0.20%</Han></SectorChange>
          </Sector>
          <Action>
            <IconBox><path d="M8 2.500h24q4 0 4 4V26l-7 11H8q-4 0-4-4V6.500q0-4 4-4zM9 12h22M9 17.500h22M9 22.500h22M9 27.500h15" /></IconBox>
            <Han $size={23.5}>下单</Han>
          </Action>
          <Action>
            <IconBox><path d="M5 7.500h30q3.500 0 3.500 3.500v21q0 3.500-3.500 3.500H5q-3.500 0-3.500-3.500V11q0-3.500 3.500-3.500zM12 3.500h16M20 15.500v13M13.500 22h13M7 37h6M27 37h6" /></IconBox>
            <Han $size={23.5}>诊股</Han>
          </Action>
          <Action>
            <IconBox><path d="M4.500 3.500h31v31h-31zM12 19h16" stroke="#bbb" /></IconBox>
            <Han $size={23.5}>删自选</Han>
          </Action>
          <Action>
            <IconBox><circle cx="20" cy="19.500" r="16" /><path d="M12.500 14.500h15M12.500 24.500h15" /></IconBox>
            <Han $size={23.5}>功能</Han>
            <Badge $size={13} />
          </Action>
        </Actions>
        <NavBar>
          <span />
          <svg width="30" height="34" viewBox="0 0 30 34" fill="none" stroke="#b4b4b4" strokeWidth="2.600" strokeLinejoin="round"><path d="M27 2v30L1.500 17z" /></svg>
          <svg width="34" height="34" viewBox="0 0 34 34" fill="none" stroke="#b4b4b4" strokeWidth="2.600"><circle cx="17" cy="17" r="15.300" /></svg>
          <svg width="30" height="30" viewBox="0 0 30 30" fill="none" stroke="#b4b4b4" strokeWidth="2.800"><rect x="1.400" y="1.400" width="27.200" height="27.200" rx="1" /></svg>
        </NavBar>
      </Bottom>
    </Screen>
  );
}
